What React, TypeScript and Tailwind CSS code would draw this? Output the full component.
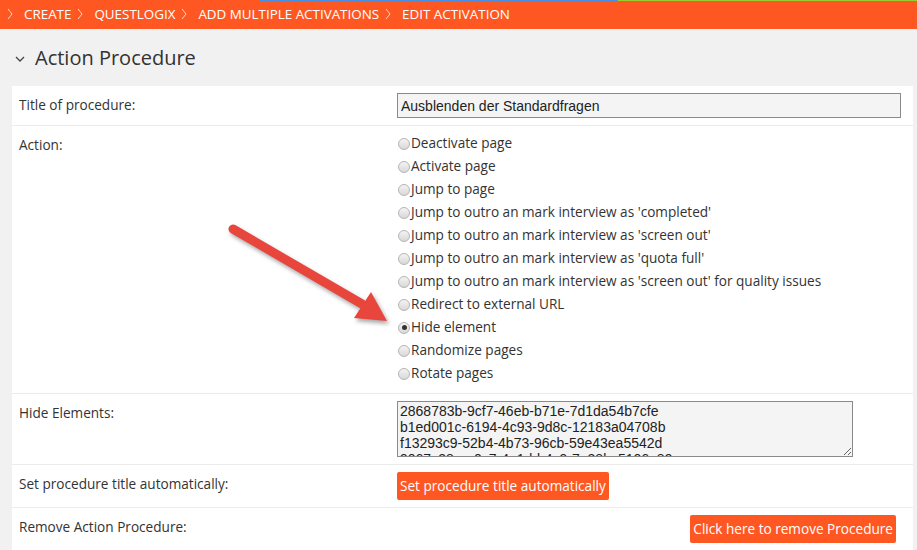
import { ReactNode } from 'react';

const crumbs = ['CREATE', 'QUESTLOGIX', 'ADD MULTIPLE ACTIVATIONS', 'EDIT ACTIVATION'];

const actions = [
  'Deactivate page',
  'Activate page',
  'Jump to page',
  "Jump to outro an mark interview as 'completed'",
  "Jump to outro an mark interview as 'screen out'",
  "Jump to outro an mark interview as 'quota full'",
  "Jump to outro an mark interview as 'screen out' for quality issues",
  'Redirect to external URL',
  'Hide element',
  'Randomize pages',
  'Rotate pages',
];

const hiddenIds = [
  '2868783b-9cf7-46eb-b71e-7d1da54b7cfe',
  'b1ed001c-6194-4c93-9d8c-12183a04708b',
  'f13293c9-52b4-4b73-96cb-59e43ea5542d',
  '9067c38e-a0c7-4a1d-b4c9-7e38bc5106e89',
].join('\n');

function Chevron() {
  return (
    <svg width="6" height="12" viewBox="0 0 6 12" className="shrink-0">
      <polyline points="1,1 5,6 1,11" fill="none" stroke="#ffd9c4" strokeWidth="1" />
    </svg>
  );
}

function Radio({ checked }: { checked?: boolean }) {
  return (
    <span className="mr-px flex h-[12px] w-[12px] shrink-0 items-center justify-center rounded-full border border-[#b5b5b5] bg-gradient-to-b from-[#f4f4f4] to-[#d8d8d8]">
      {checked && <span className="h-[5px] w-[5px] rounded-full bg-[#333]" />}
    </span>
  );
}

function Row({ label, children, last }: { label: string; children: ReactNode; last?: boolean }) {
  return (
    <div className={`grid grid-cols-[385px_1fr] ${last ? '' : 'border-b border-[#ececec]'}`}>
      <div className="pl-[7px] pt-[9px] leading-[20px]">{label}</div>
      <div className="pr-[12px]">{children}</div>
    </div>
  );
}

function App() {
  return (
    <div className="relative min-h-screen bg-[#f1f1f1] font-['Open_Sans',sans-serif] text-[13.6px] text-[#333]">
      <header className="bg-[#ff5722]">
        <div className="flex h-px">
          <div className="w-[260px]" />
          <div className="w-[358px] bg-[#4a90e2]" />
          <div className="flex-1 bg-[#9acd32]" />
        </div>
        <nav className="flex h-[28px] items-center gap-[6px] pb-[1px] pl-[7px] text-[13.4px] text-white">
          {crumbs.map((c) => (
            <div key={c} className="flex items-center gap-[11px]">
              <Chevron />
              <span>{c}</span>
            </div>
          ))}
        </nav>
      </header>

      <div className="flex h-[57px] items-center pl-[15px] pt-[1px]">
        <svg width="10" height="6" viewBox="0 0 10 6" className="mr-[10px] mt-[2px]">
          <polyline points="1,1 5,5 9,1" fill="none" stroke="#444" strokeWidth="1.3" />
        </svg>
        <h1 className="text-[20px] leading-none text-[#333]">Action Procedure</h1>
      </div>

      <div className="ml-[12px] mr-[4px] bg-white">
        <Row label="Title of procedure:">
          <div className="py-[7px]">
            <input
              readOnly
              value="Ausblenden der Standardfragen"
              className="h-[25px] w-full border border-[#8a8a8a] bg-[#f4f4f4] px-[3px] font-['Liberation_Sans',Arial,sans-serif] text-[14px] text-[#222] outline-none"
            />
          </div>
        </Row>

        <Row label="Action:">
          <ul className="pb-[8px] pt-[6px]">
            {actions.map((a) => (
              <li key={a} className="flex h-[23px] items-center pl-px">
                <Radio checked={a === 'Hide element'} />
                <span>{a}</span>
              </li>
            ))}
          </ul>
        </Row>

        <Row label="Hide Elements:">
          <div className="py-[7px]">
            <textarea
              readOnly
              value={hiddenIds}
              className="block h-[56px] w-[456px] resize overflow-y-scroll border border-[#8a8a8a] bg-[#f4f4f4] px-[2px] pt-[1px] font-['Liberation_Sans',Arial,sans-serif] text-[14px] leading-[16px] text-[#222] outline-none"
            />
          </div>
        </Row>

        <Row label="Set procedure title automatically:">
          <div className="py-[7px]">
            <button className="h-[28px] rounded-[2px] bg-[#ff5722] px-[3px] text-[13.6px] text-white">
              Set procedure title automatically
            </button>
          </div>
        </Row>

        <Row label="Remove Action Procedure:" last>
          <div className="flex justify-end py-[7px] pr-[5px]">
            <button className="h-[28px] rounded-[2px] bg-[#ff5722] px-[3px] text-[13.6px] text-white">
              Click here to remove Procedure
            </button>
          </div>
        </Row>
      </div>

      <svg
        className="pointer-events-none absolute left-0 top-0 drop-shadow-[2px_3px_2px_rgba(0,0,0,0.35)]"
        width="917"
        height="550"
        viewBox="0 0 917 550"
      >
        <line x1="233" y1="229" x2="362" y2="304" stroke="#e8453c" strokeWidth="9" strokeLinecap="round" />
        <polygon points="387,321 354,318 371,292" fill="#e8453c" />
      </svg>
    </div>
  );
}

export default App;
